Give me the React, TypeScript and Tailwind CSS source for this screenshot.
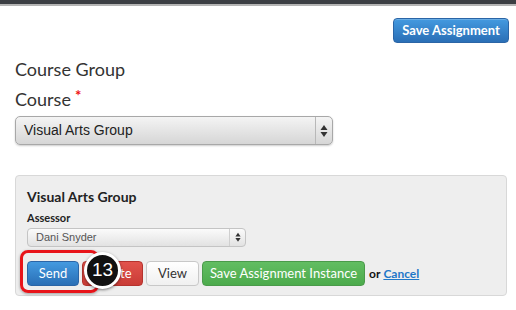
import React from 'react'

function Arrows({ small }: { small?: boolean }) {
    const s = small ? 0.75 : 1
    return (
        <svg width={8 * s} height={14 * s} viewBox="0 0 8 14">
            <path d="M4 1 L7.5 6 L0.5 6 Z" fill="#333" />
            <path d="M4 13 L7.5 8 L0.5 8 Z" fill="#333" />
        </svg>
    )
}

export default function App() {
    return (
        <div className="w-[516px] h-[310px] overflow-hidden bg-white font-['Lato',sans-serif] text-[#333]">
            {/* top bar */}
            <div className="h-[4px] bg-[#3b3e43]" />
            <div className="h-[2px] bg-[#b4b4b4]" />

            <div className="px-[15px]">
                {/* header actions */}
                <div className="flex justify-end pt-[12px] -mr-[8px]">
                    <button className="w-[116px] h-[25px] rounded-[4px] border border-[#2b65a6] bg-gradient-to-b from-[#449ae0] to-[#2a6fb6] text-white text-[13px] font-bold shadow-[inset_0_1px_0_rgba(255,255,255,0.2)]">
                        Save Assignment
                    </button>
                </div>

                <h2 className="mt-[15px] text-[18px] leading-[22px] font-normal">Course Group</h2>

                <div className="mt-[8px] flex items-start text-[18px] leading-[22px]">
                    <span>Course</span>
                    <span className="ml-[4px] text-[#e11] text-[15px] leading-[14px] font-bold">*</span>
                </div>

                {/* course select */}
                <div className="mt-[6px] w-[318px] h-[29px] flex items-stretch rounded-[5px] border border-[#a8a8a8] bg-gradient-to-b from-[#f4f4f4] to-[#d6d6d6] shadow-[0_1px_2px_rgba(0,0,0,0.2)]">
                    <div className="flex-1 flex items-center pl-[8px] font-['Liberation_Sans',Arial,sans-serif] text-[14px] text-[#222]">
                        Visual Arts Group
                    </div>
                    <div className="w-[17px] border-l border-[#b8b8b8] flex items-center justify-center">
                        <Arrows />
                    </div>
                </div>

                {/* group panel */}
                <div className="relative mt-[30px] w-[492px] h-[121px] rounded-[4px] border border-[#d8d8d8] bg-[#eeeeee] px-[11px] pt-[12px]">
                    <h3 className="text-[14px] leading-[18px] font-bold text-[#222]">Visual Arts Group</h3>
                    <div className="mt-[5px] text-[11px] leading-[13px] font-bold text-[#222]">Assessor</div>

                    <div className="mt-[4px] w-[219px] h-[19px] flex items-stretch rounded-[4px] border border-[#c4c4c4] bg-gradient-to-b from-[#fbfbfb] to-[#e2e2e2]">
                        <div className="flex-1 flex items-center pl-[8px] font-['Liberation_Sans',Arial,sans-serif] text-[11px] text-[#555]">
                            Dani Snyder
                        </div>
                        <div className="w-[16px] border-l border-[#cfcfcf] flex items-center justify-center">
                            <Arrows small />
                        </div>
                    </div>

                    <div className="mt-[14px] flex items-center gap-[3px] text-[13px]">
                        <button className="w-[52px] h-[25px] rounded-[4px] border border-[#2b65a6] bg-gradient-to-b from-[#449ae0] to-[#2a6fb6] text-white">
                            Send
                        </button>
                        <button className="w-[61px] h-[25px] rounded-[4px] border border-[#b5332e] bg-gradient-to-b from-[#e2534c] to-[#c93c36] text-white">
                            Delete
                        </button>
                        <button className="w-[53px] h-[25px] rounded-[4px] border border-[#c8c8c8] bg-gradient-to-b from-white to-[#f0f0f0] text-[#333]">
                            View
                        </button>
                        <button className="w-[163px] h-[25px] rounded-[4px] border border-[#4a9a4a] bg-gradient-to-b from-[#62bd62] to-[#4cab4c] text-white">
                            Save Assignment Instance
                        </button>
                        <span className="ml-[1px] text-[12px] font-bold text-[#111]">or</span>
                        <a className="text-[12px] text-[#1f77c8] underline font-bold">Cancel</a>
                    </div>

                    {/* annotation highlight */}
                    <div className="absolute left-[4px] top-[74px] w-[79px] h-[43px] rounded-[8px] border-[3px] border-[#e8141a] shadow-[0_1px_3px_rgba(0,0,0,0.35)] pointer-events-none" />
                    <div className="absolute left-[68px] top-[76px] w-[37px] h-[37px] rounded-full bg-[#111] border-[3px] border-white shadow-[0_1px_3px_rgba(0,0,0,0.5)] flex items-center justify-center text-white text-[19px] font-['Liberation_Sans',Arial,sans-serif]">
                        13
                    </div>
                </div>
            </div>
        </div>
    )
}
